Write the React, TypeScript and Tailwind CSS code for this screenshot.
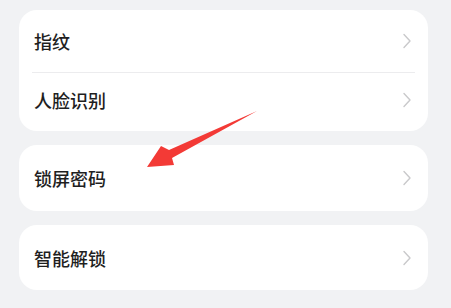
import React from 'react';

const Chevron = () => (
  <svg width="10" height="16" viewBox="0 0 10 16" fill="none" className="shrink-0">
    <path d="M2 1.5 L8 8 L2 14.5" stroke="#c9c9cb" strokeWidth="1.4" strokeLinecap="round" strokeLinejoin="round" />
  </svg>
);

const Row = ({ label, h }: { label: string; h: string }) => (
  <div className={`flex items-center justify-between pl-[15px] pr-[16px] ${h}`}>
    <span className="text-[18px] font-medium leading-none text-[#1f1f1f]">{label}</span>
    <Chevron />
  </div>
);

export default function App() {
  return (
    <div
      className="relative h-[308px] w-[451px] overflow-hidden bg-[#f1f2f4] pt-[10px]"
      style={{ fontFamily: '"Noto Sans CJK SC", "Noto Sans", sans-serif' }}
    >
      <div className="ml-[19px] mr-[23px] flex flex-col gap-[14px]">
        <div className="rounded-[18px] bg-white">
          <Row label="指纹" h="h-[62px]" />
          <div className="mx-[13px] h-px bg-[#ececee]" />
          <Row label="人脸识别" h="h-[58px] pb-[4px]" />
        </div>
        <div className="rounded-[18px] bg-white">
          <Row label="锁屏密码" h="h-[66px]" />
        </div>
        <div className="rounded-[18px] bg-white">
          <Row label="智能解锁" h="h-[65px]" />
        </div>
      </div>
      {/* red annotation arrow */}
      <svg className="pointer-events-none absolute left-0 top-0" width="451" height="308" viewBox="0 0 451 308">
        <polygon
          points="257,111 169,150 161,146 147,167 174,165 172,158"
          fill="#f33a36"
        />
      </svg>
    </div>
  );
}
